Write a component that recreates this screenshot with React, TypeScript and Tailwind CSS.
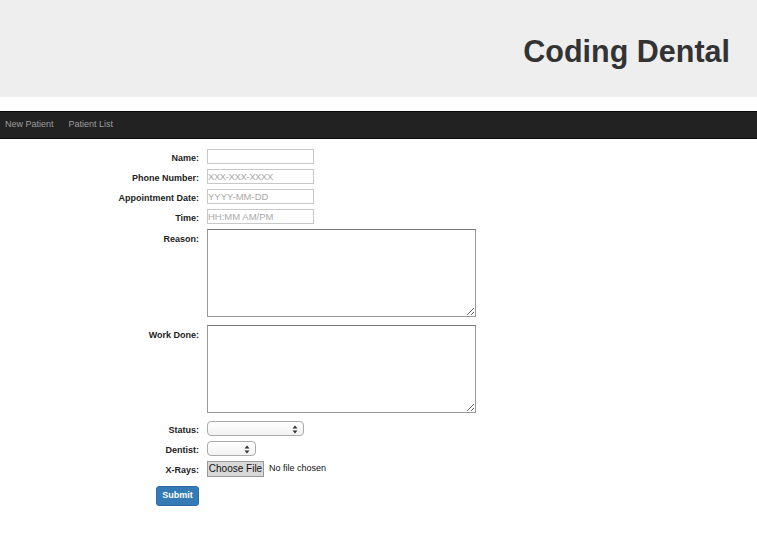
import React from 'react';

const font = { fontFamily: '"Liberation Sans", Arial, sans-serif' };

const Label: React.FC<{ text: string; top?: boolean }> = ({ text, top }) => (
    <div className={`w-[199px] shrink-0 text-right text-[9px] font-bold text-[#222] ${top ? 'pt-[5px] leading-[10px]' : 'pt-[3px] leading-[12px]'}`}>
        {text}
    </div>
);

const Arrows = () => (
    <svg width="6" height="9" viewBox="0 0 6 9" className="absolute right-[5px] top-[3px]">
        <path d="M0.5 3.5 L3 0.5 L5.5 3.5 Z" fill="#333" />
        <path d="M0.5 5.5 L3 8.5 L5.5 5.5 Z" fill="#333" />
    </svg>
);

export default function App() {
    return (
        <div className="min-h-[543px] w-full bg-white" style={font}>
            {/* Header */}
            <div className="h-[97px] bg-[#eeeeee] flex justify-end pr-[27px] pt-[33px]">
                <h1 className="text-[30.5px] font-bold text-[#333] leading-[36px]">Coding Dental</h1>
            </div>

            {/* Navbar */}
            <div className="mt-[14px] h-[28px] bg-[#222] border-y border-[#080808] flex items-center text-[9px] text-[#9d9d9d]">
                <span className="pl-[5px]">New Patient</span>
                <span className="pl-[15px]">Patient List</span>
            </div>

            {/* Form */}
            <div className="pt-[10px] flex flex-col text-[9px]">
                <div className="flex gap-[8px] mb-[5px]">
                    <Label text="Name:" />
                    <input className="w-[107px] h-[15px] border border-[#c8c8c8] px-0 text-[9.5px] outline-none" />
                </div>
                <div className="flex gap-[8px] mb-[5px]">
                    <Label text="Phone Number:" />
                    <input placeholder="XXX-XXX-XXXX" className="w-[107px] h-[15px] border border-[#c8c8c8] px-0 text-[9.5px] outline-none placeholder:text-[#a9a9a9] tracking-[-0.4px]" />
                </div>
                <div className="flex gap-[8px] mb-[5px]">
                    <Label text="Appointment Date:" />
                    <input placeholder="YYYY-MM-DD" className="w-[107px] h-[15px] border border-[#c8c8c8] px-0 text-[9.5px] outline-none placeholder:text-[#a9a9a9]" />
                </div>
                <div className="flex gap-[8px] mb-[5px]">
                    <Label text="Time:" />
                    <input placeholder="HH:MM AM/PM" className="w-[107px] h-[15px] border border-[#c8c8c8] px-0 text-[9.5px] outline-none placeholder:text-[#a9a9a9]" />
                </div>
                <div className="flex gap-[8px] mb-[8px]">
                    <Label text="Reason:" top />
                    <textarea className="block w-[269px] h-[88px] border border-[#999] border-t-[#777] text-[10px] outline-none" />
                </div>
                <div className="flex gap-[8px] mb-[8px]">
                    <Label text="Work Done:" top />
                    <textarea className="block w-[269px] h-[88px] border border-[#999] border-t-[#777] text-[10px] outline-none" />
                </div>
                <div className="flex gap-[8px] mb-[5px]">
                    <Label text="Status:" />
                    <div className="relative w-[97px] h-[15px] rounded-[4px] border border-[#aaa] bg-gradient-to-b from-white to-[#f2f2f2]">
                        <Arrows />
                    </div>
                </div>
                <div className="flex gap-[8px] mb-[5px]">
                    <Label text="Dentist:" />
                    <div className="relative w-[49px] h-[15px] rounded-[4px] border border-[#aaa] bg-gradient-to-b from-white to-[#f2f2f2]">
                        <Arrows />
                    </div>
                </div>
                <div className="flex gap-[8px] mb-[9px]">
                    <Label text="X-Rays:" />
                    <div className="flex items-center gap-[5px]">
                        <div className="w-[57px] h-[16px] bg-[#d8d8d8] border border-[#999] flex items-center justify-center text-[10px] text-[#111] leading-none">Choose File</div>
                        <span className="text-[9px] text-[#111]">No file chosen</span>
                    </div>
                </div>
                <div className="flex w-[199px] justify-end">
                    <button className="w-[43px] h-[20px] rounded-[3px] bg-[#337ab7] border border-[#2e6da4] text-white text-[9px] font-bold">Submit</button>
                </div>
            </div>
        </div>
    );
}
